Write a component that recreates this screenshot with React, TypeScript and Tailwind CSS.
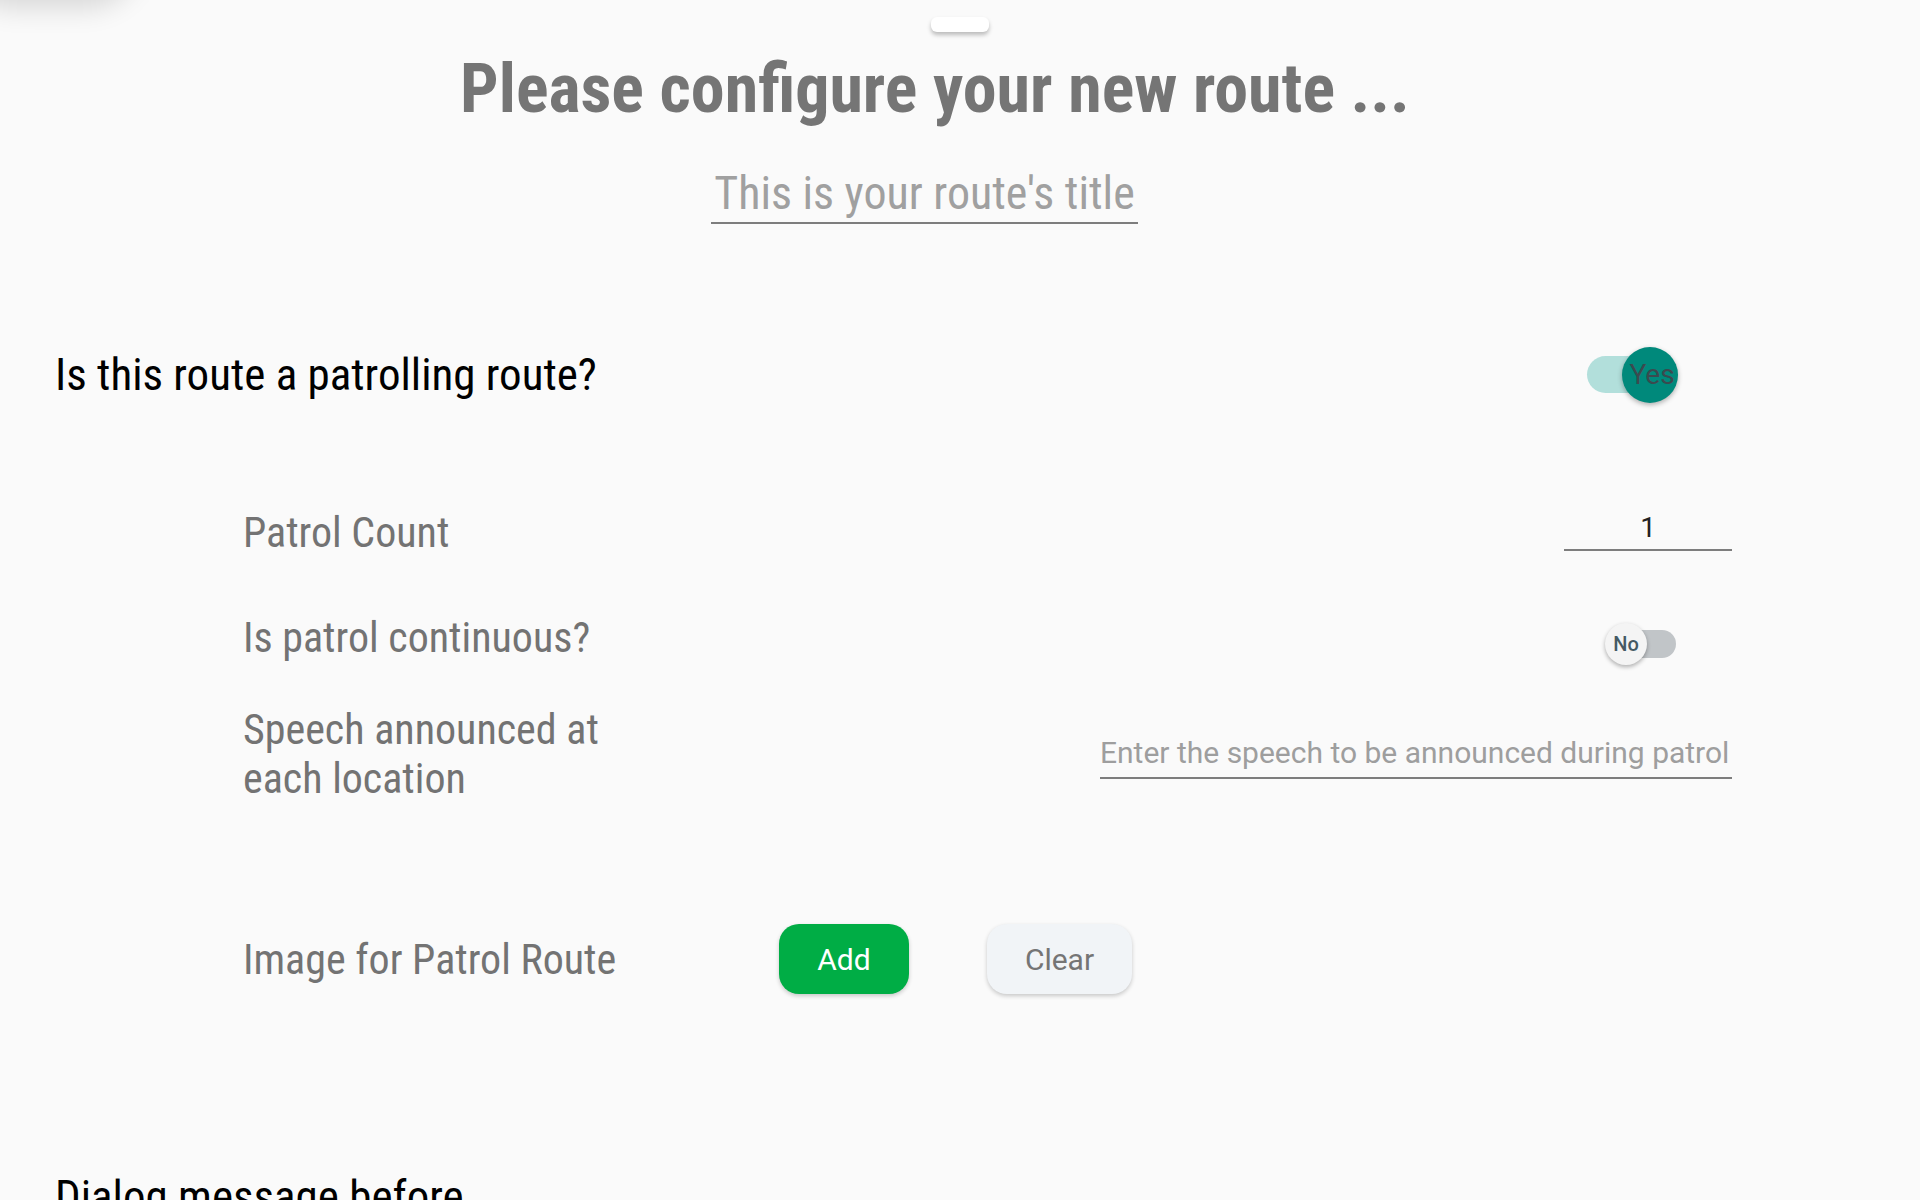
import React from "react";

const cond = "font-['Roboto_Condensed','Liberation_Sans_Narrow','DejaVu_Sans_Condensed',Roboto,sans-serif] [font-stretch:condensed]";
const roboto = "font-['Roboto','Liberation_Sans',sans-serif]";

function Toggle({ on }: { on: boolean }) {
  if (on) {
    return (
      <div className="relative w-[91px] h-[56px]">
        <div className="absolute left-0 top-[9px] w-[85px] h-[37px] rounded-full bg-[#b2dfdb]" />
        <div className="absolute right-0 top-0 w-[56px] h-[56px] rounded-full bg-[#00897b] shadow-[0_2px_5px_rgba(0,0,0,0.3)] flex items-center justify-center">
          <span className={`${roboto} text-[28px] leading-none text-[#3b4a4f] pl-[4px]`}>Yes</span>
        </div>
      </div>
    );
  }
  return (
    <div className="relative w-[71px] h-[42px]">
      <div className="absolute right-0 top-[7px] w-[64px] h-[28px] rounded-full bg-[#c1c5c8]" />
      <div className="absolute left-0 top-0 w-[42px] h-[42px] rounded-full bg-[#f4f4f4] shadow-[0_2px_4px_rgba(0,0,0,0.3)] flex items-center justify-center">
        <span className={`${roboto} text-[20px] font-medium leading-none text-[#455a64]`}>No</span>
      </div>
    </div>
  );
}

export default function App() {
  return (
    <div className="relative min-h-screen h-[1200px] overflow-hidden bg-[#fafafa]">
      {/* shadow of a control sitting above the visible area */}
      <div className="absolute -left-[40px] -top-[110px] w-[180px] h-[108px] rounded-full bg-[#fafafa] shadow-[0_10px_28px_rgba(0,0,0,0.14)]" />

      <div className="pt-[17px] flex justify-center">
        <div className="w-[58px] h-[15px] rounded-[6px] bg-white shadow-[0_3px_4px_rgba(0,0,0,0.25)]" />
      </div>

      <h1 className={`${cond} mt-[17px] pr-[50px] text-center text-[68px] leading-[80px] font-bold text-[#757575]`}>
        Please configure your new route ...
      </h1>

      <div className="mt-[39px] flex justify-center pr-[71px]">
        <div className={`${cond} w-[427px] pb-[4px] border-b-2 border-[#7d7d7d] text-center text-[46px] leading-[50px] font-normal text-[#a0a0a0] whitespace-nowrap`}>
          This is your route's title
        </div>
      </div>

      <div className="pl-[55px] pr-[188px]">
        {/* patrolling route */}
        <div className="mt-[123px] flex items-center justify-between h-[56px]">
          <div className={`${cond} text-[45px] leading-[56px] text-black`}>Is this route a patrolling route?</div>
          <div className="mr-[54px]">
            <Toggle on />
          </div>
        </div>

        <div className="pl-[188px]">
          <div className="mt-[105px] flex items-start justify-between">
            <div className={`${cond} text-[42px] leading-[49px] text-[#737373]`}>Patrol Count</div>
            <div className={`${roboto} mt-[4px] w-[168px] pb-[5px] border-b-2 border-[#7d7d7d] text-center text-[28px] leading-[32px] text-[#212121]`}>
              1
            </div>
          </div>

          <div className="mt-[56px] flex items-start justify-between">
            <div className={`${cond} text-[42px] leading-[49px] text-[#737373]`}>Is patrol continuous?</div>
            <div className="mt-[10px] mr-[56px]">
              <Toggle on={false} />
            </div>
          </div>

          <div className="mt-[40px] flex items-start justify-between">
            <div className={`${cond} text-[42px] leading-[49px] text-[#737373]`}>
              Speech announced at
              <br />
              each location
            </div>
            <div className={`${roboto} mt-[30px] w-[632px] pb-[6px] border-b-2 border-[#7d7d7d] text-[30px] leading-[36px] text-[#9e9e9e] whitespace-nowrap`}>
              Enter the speech to be announced during patrol
            </div>
          </div>

          <div className="mt-[121px] flex items-center h-[70px]">
            <div className={`${cond} w-[536px] text-[42px] leading-[49px] text-[#737373]`}>Image for Patrol Route</div>
            <button className={`${roboto} w-[130px] h-[70px] rounded-[20px] bg-[#00ad45] text-white text-[30px] shadow-[0_2px_4px_rgba(0,0,0,0.2)]`}>
              Add
            </button>
            <button className={`${roboto} ml-[78px] w-[145px] h-[70px] rounded-[20px] bg-[#f1f4f7] text-[#757575] text-[30px] shadow-[0_2px_4px_rgba(0,0,0,0.2)]`}>
              Clear
            </button>
          </div>
        </div>

        <div className={`${cond} mt-[175px] text-[45px] leading-[56px] text-black`}>Dialog message before</div>
      </div>
    </div>
  );
}
